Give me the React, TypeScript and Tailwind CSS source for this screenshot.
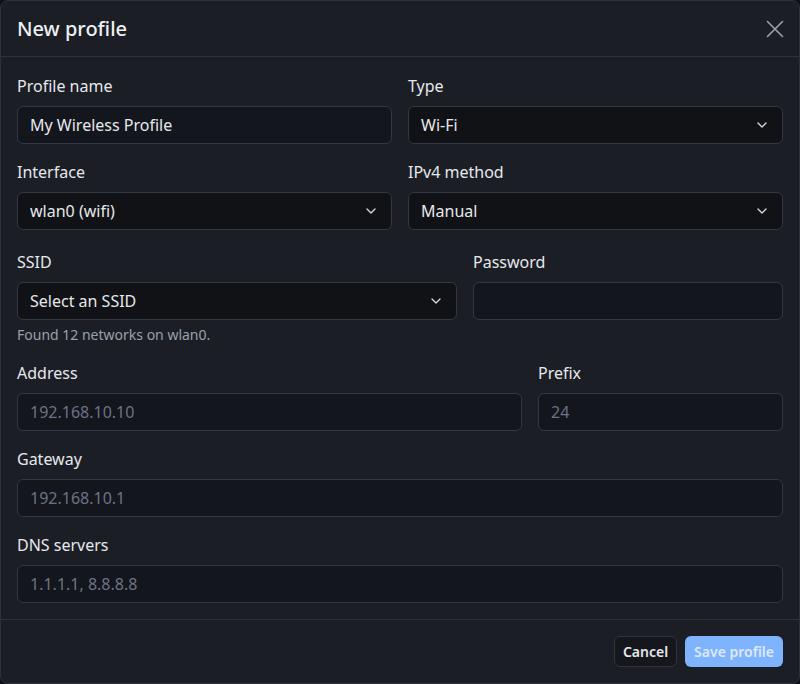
import React from 'react';
import { ChevronDown } from 'lucide-react';

const labelCls = 'block text-base leading-6 text-[#e6e8ec] mb-2';
const inputCls =
  'block w-full h-[38px] rounded-md border border-[#313745] bg-[#13161d] px-3 text-base text-[#e6e8ec] placeholder:text-[#6b7384] outline-none';

const Select = ({ value }: { value: string }) => (
  <div className="relative">
    <div className="flex items-center w-full h-[38px] rounded-md border border-[#313745] bg-[#111216] px-3 text-base text-[#e6e8ec]">
      {value}
    </div>
    <ChevronDown className="absolute right-[13px] top-[11px] w-4 h-4 text-[#d4d7dd]" strokeWidth={2} />
  </div>
);

export default function App() {
  return (
    <div className="min-h-screen bg-[#0f1115]" style={{ fontFamily: '"Noto Sans", "Open Sans", sans-serif' }}>
      <div className="w-[800px] h-[684px] flex flex-col rounded-lg border border-[#2c313c] bg-[#1b1e25] overflow-hidden">
        {/* Header */}
        <div className="h-[56px] shrink-0 flex items-center justify-between pl-4 pr-[15px] border-b border-[#2c313c]">
          <h2 className="text-xl font-medium text-[#eef0f3]">New profile</h2>
          <button type="button" className="flex items-center justify-center text-[#9ba1ab]">
            <svg width="18" height="18" viewBox="0 0 18 18" fill="none" stroke="currentColor" strokeWidth="1.6" strokeLinecap="round">
              <path d="M1.5 1.5 L16.5 16.5 M16.5 1.5 L1.5 16.5" />
            </svg>
          </button>
        </div>

        {/* Body */}
        <div className="flex-1 px-4 pt-[17px]">
          <div className="grid grid-cols-2 gap-x-4 gap-y-4">
            <div>
              <label className={labelCls}>Profile name</label>
              <input className={inputCls} defaultValue="My Wireless Profile" />
            </div>
            <div>
              <label className={labelCls}>Type</label>
              <Select value="Wi-Fi" />
            </div>
            <div>
              <label className={labelCls}>Interface</label>
              <Select value="wlan0 (wifi)" />
            </div>
            <div>
              <label className={labelCls}>IPv4 method</label>
              <Select value="Manual" />
            </div>
          </div>

          <div className="grid grid-cols-[1fr_310px] gap-x-4 mt-5">
            <div>
              <label className={labelCls}>SSID</label>
              <Select value="Select an SSID" />
              <p className="mt-[5px] text-sm leading-5 text-[#9aa0aa]">Found 12 networks on wlan0.</p>
            </div>
            <div>
              <label className={labelCls}>Password</label>
              <input className={inputCls} type="password" />
            </div>
          </div>

          <div className="grid grid-cols-[1fr_245px] gap-x-4 mt-4">
            <div>
              <label className={labelCls}>Address</label>
              <input className={inputCls} placeholder="192.168.10.10" />
            </div>
            <div>
              <label className={labelCls}>Prefix</label>
              <input className={inputCls} placeholder="24" />
            </div>
          </div>

          <div className="mt-4">
            <label className={labelCls}>Gateway</label>
            <input className={inputCls} placeholder="192.168.10.1" />
          </div>

          <div className="mt-4">
            <label className={labelCls}>DNS servers</label>
            <input className={inputCls} placeholder="1.1.1.1, 8.8.8.8" />
          </div>
        </div>

        {/* Footer */}
        <div className="shrink-0 h-[64px] flex items-center justify-end gap-2 pl-4 pr-4 border-t border-[#2c313c]">
          <button
            type="button"
            className="h-[31px] px-2 rounded-md border border-[#2f3440] bg-[#15171d] text-sm font-semibold text-[#e6e8ec]"
          >
            Cancel
          </button>
          <button
            type="button"
            disabled
            className="h-[31px] px-[9px] rounded-md bg-[#80b3fd] text-sm font-semibold text-[#dde9fd]"
          >
            Save profile
          </button>
        </div>
      </div>
    </div>
  );
}
